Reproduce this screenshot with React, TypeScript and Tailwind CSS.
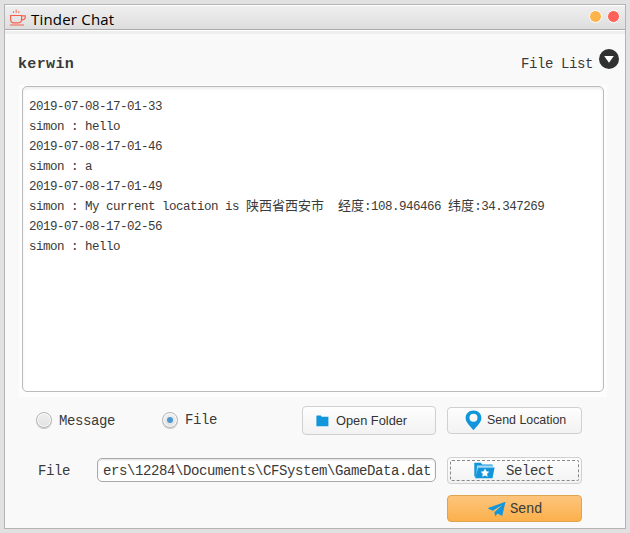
import type { ReactNode } from "react";

const mono = "font-['Liberation_Mono','Noto_Sans_CJK_SC',monospace] text-[#3a3a3a]";
const label = `${mono} text-[14px] leading-[18px] tracking-[-0.4px] whitespace-pre`;

function Cjk({ children }: { children: ReactNode }) {
  return <span className="font-['Noto_Sans_CJK_SC',sans-serif] text-[13px] leading-none tracking-normal">{children}</span>;
}

const messages: ReactNode[] = [
  "2019-07-08-17-01-33",
  "simon : hello",
  "2019-07-08-17-01-46",
  "simon : a",
  "2019-07-08-17-01-49",
  <>
    simon : My current location is <Cjk>陕西省西安市</Cjk>{"  "}
    <Cjk>经度</Cjk>:108.946466 <Cjk>纬度</Cjk>:34.347269
  </>,
  "2019-07-08-17-02-56",
  "simon : hello",
];

function CupIcon() {
  return (
    <svg width="18" height="18" viewBox="0 0 18 18" fill="none" stroke="#f5604e" strokeWidth="1.2" className="shrink-0">
      <path d="M1.6 6.5H12.6V10Q12.6 13.8 9.5 13.8H4.7Q1.6 13.8 1.6 10Z" />
      <path d="M12.6 6.8H16.2V9Q15.5 11 12.4 11.2M1 16H15" />
      <path d="M4.5 2V4M7.2 .5V4M9.8 2V4" strokeOpacity=".75" />
    </svg>
  );
}

function Radio({ checked = false }: { checked?: boolean }) {
  return (
    <span className="flex size-4 shrink-0 items-center justify-center rounded-full border border-[#b6b6b6] bg-linear-to-b from-[#efefef] to-[#e2e2e2] shadow-[inset_0_0_0_1px_#fafafa,0_1px_0_#c4c4c4]">
      {checked && <span className="size-1.5 rounded-full bg-[#4b98d3]" />}
    </span>
  );
}

const button = "flex items-center rounded-[4px] border border-[#d0d0d0] bg-linear-to-b from-[#fefefe] to-[#f2f2f2]";
const buttonText = "font-['Liberation_Sans',Arial,sans-serif] text-[#333]";

export default function App() {
  return (
    <div className="h-[533px] w-[630px] bg-[#e1e1e1] px-1 pt-1">
      <div className="flex h-[525px] w-[622px] flex-col border border-[#b4b4b4] bg-[#f9f9f9]">
        <header className="flex h-[25px] shrink-0 items-center border-t border-b border-t-white border-b-[#a9a9a9] bg-linear-to-b from-[#efefef] to-[#dedede] pr-[5px] pl-1">
          <CupIcon />
          <h1 className="ml-1 pt-[2px] font-['Open_Sans','Noto_Sans',sans-serif] text-[15px] leading-5 tracking-[0.2px] text-black">Tinder Chat</h1>
          <div className="mb-[3px] ml-auto flex gap-[5px]">
            <span className="size-[13px] rounded-full border border-white bg-[#fdb44b]" />
            <span className="size-[13px] rounded-full border border-white bg-[#ff6259]" />
          </div>
        </header>
        <div className="h-1 shrink-0 border-t border-white bg-[#eeeeee]" />

        <main className="flex flex-col">
          <div className="flex h-[51px] items-start pr-[6px] pl-[13px]">
            <h2 className={`${mono} pt-[21px] text-[15px] leading-[20px] font-bold tracking-[0.35px]`}>kerwin</h2>
            <span className={`${label} mt-[21px] ml-auto`}>File List</span>
            <span className="mt-[15px] ml-[6px] flex size-5 items-center justify-center rounded-full bg-[#303030]">
              <svg width="10" height="8" viewBox="0 0 10 8"><path d="M.2 1H9.8L5 7.7Z" fill="white" /></svg>
            </span>
          </div>

          <div className="ml-[14px] h-[312px] w-[588px] bg-[#fdfdfd] pt-px pl-[3px]">
            <div className={`${mono} h-[306px] w-[582px] overflow-hidden rounded-[5px] border border-[#bbb] bg-white pt-[10px] pl-[6px] text-[12.5px] tracking-[-0.5px] shadow-[inset_0_2px_3px_#eeeeee]`}>
              {messages.map((message, i) => (
                <p key={i} className="h-5 leading-5 whitespace-pre">{message}</p>
              ))}
            </div>
          </div>

          <div className="mt-[9px] flex h-[29px] items-start pl-[31px]">
            <label className="mt-[4px] flex w-[126px] items-center gap-[7px]">
              <Radio /><span className={`${label} pt-[2px]`}>Message</span>
            </label>
            <label className="mt-[4px] flex w-[140px] items-center gap-[7px]">
              <Radio checked /><span className={`${label} pt-px`}>File</span>
            </label>
            <button className={`${button} ${buttonText} h-[29px] w-[134px] pl-[13px] text-[12.8px]`}>
              <svg width="13" height="12" viewBox="0 0 13 12" className="mr-[7px] shrink-0">
                <path d="M.4 1Q.4.5 1 .5H4.8L5.7 1.7H12.4V11.3H.4Z" fill="#1296db" />
              </svg>
              Open Folder
            </button>
            <button className={`${button} ${buttonText} mt-px ml-[11px] h-[27px] w-[135px] pl-[17px] text-[12.4px]`}>
              <svg width="17" height="21" viewBox="0 0 17 21" className="mr-[5px] shrink-0">
                <path d="M8.5.5C3.8.5.6 3.7.6 8c0 4.7 4.6 8 7.9 12.3C11.8 16 16.4 12.7 16.4 8 16.4 3.7 13.2.5 8.5.5Zm0 3.3a4 4 0 1 1 0 8 4 4 0 0 1 0-8Z" fill="#1296db" fillRule="evenodd" />
              </svg>
              Send Location
            </button>
          </div>

          <div className="mt-[22px] flex h-[27px] items-start pl-[33px]">
            <span className={`${label} mt-[5px] w-[59px]`}>File</span>
            <div className="mt-px flex h-6 w-[339px] items-center justify-end overflow-hidden rounded-[5px] border border-[#aaa] bg-white pt-px pr-[4px] shadow-[inset_0_1px_2px_#dddddd]">
              <span className={label}>{"ers\\12284\\Documents\\CFSystem\\GameData.dat"}</span>
            </div>
            <button className={`${button} ml-[11px] h-[27px] w-[135px] p-[2px]`}>
              <span className="flex h-[21px] w-full items-center rounded-[2px] border border-dashed border-[#888] pl-[23px]">
                <svg width="21" height="17" viewBox="0 0 21 17" className="mr-[11px] shrink-0">
                  <path d="M.3.8H6.8L8.2 2.5H18.5V5H4L2 14.5H.3Z" fill="#1296db" />
                  <path d="M3 3.5H18.2V5H4.6L2.2 14Z" fill="#a8d9f4" />
                  <path d="M4.2 5.6H20.6L18.5 16.2H1.1Z" fill="#1296db" />
                  <path d="m11 6.6 1.3 2.7 3 .4-2.2 2.1.5 3-2.6-1.4-2.7 1.4.5-3-2.1-2.1 3-.4Z" fill="white" />
                </svg>
                <span className={label}>Select</span>
              </span>
            </button>
          </div>

          <button className="mt-[11px] ml-[442px] flex h-[27px] w-[135px] items-center rounded-[4px] border border-[#dfa450] bg-linear-to-b from-[#fdc57c] to-[#fbb04a] pl-[39px]">
            <svg width="19" height="16" viewBox="0 0 19 16" className="mr-[4px] shrink-0">
              <path d="M18.5.8 15.2 15 10.6 12.4 8.2 15.2 7.4 11.3 15.2 4 5.8 9.8.5 7.2Z" fill="#1296db" />
            </svg>
            <span className={label}>Send</span>
          </button>
        </main>
      </div>
    </div>
  );
}
